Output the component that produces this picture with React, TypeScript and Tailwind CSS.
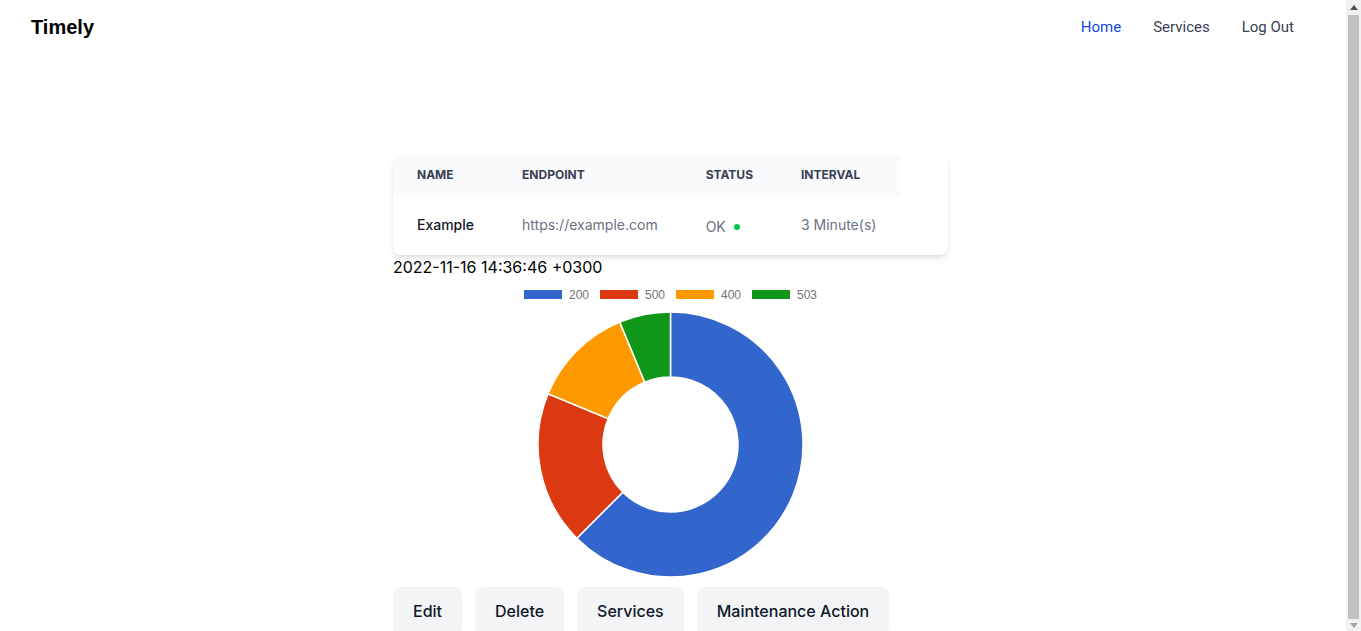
import React from "react";

const slices = [
  { label: "200", value: 10, color: "#3366cc" },
  { label: "500", value: 3, color: "#dc3912" },
  { label: "400", value: 2, color: "#ff9900" },
  { label: "503", value: 1, color: "#109618" },
];

function arcPath(cx: number, cy: number, r1: number, r2: number, a0: number, a1: number) {
  const p = (r: number, a: number) => {
    const rad = ((a - 90) * Math.PI) / 180;
    return [cx + r * Math.cos(rad), cy + r * Math.sin(rad)];
  };
  const large = a1 - a0 > 180 ? 1 : 0;
  const [x0, y0] = p(r2, a0);
  const [x1, y1] = p(r2, a1);
  const [x2, y2] = p(r1, a1);
  const [x3, y3] = p(r1, a0);
  return `M${x0} ${y0} A${r2} ${r2} 0 ${large} 1 ${x1} ${y1} L${x2} ${y2} A${r1} ${r1} 0 ${large} 0 ${x3} ${y3} Z`;
}

function Donut() {
  const total = slices.reduce((s, x) => s + x.value, 0);
  let a = 0;
  const cx = 277.5;
  const cy = 165.5;
  return (
    <svg width="555" height="308" viewBox="0 0 555 308" className="block">
      {slices.map((s, i) => (
        <g key={s.label}>
          <rect x={131 + i * 76} y={11} width={38} height={9} fill={s.color} />
          <text
            x={176 + i * 76}
            y={19.5}
            fontSize="12"
            fill="#757575"
            fontFamily="'Liberation Sans', Arial, sans-serif"
          >
            {s.label}
          </text>
        </g>
      ))}
      {slices.map((s) => {
        const a0 = a;
        const a1 = a + (s.value / total) * 360;
        a = a1;
        return (
          <path
            key={s.label}
            d={arcPath(cx, cy, 67.5, 132.5, a0, a1)}
            fill={s.color}
            stroke="#ffffff"
            strokeWidth="1.5"
          />
        );
      })}
    </svg>
  );
}

function FakeScrollbar() {
  return (
    <div className="flex h-[631px] w-[15px] shrink-0 flex-col bg-[#f1f1f1]">
      <div className="flex h-[15px] items-center justify-center">
        <svg width="8" height="5" viewBox="0 0 8 5">
          <polygon points="4,0 8,5 0,5" fill="#505050" />
        </svg>
      </div>
      <div className="mx-[2px] flex-1 bg-[#c1c1c1]" />
      <div className="flex h-[12px] items-center justify-center">
        <svg width="8" height="5" viewBox="0 0 8 5">
          <polygon points="0,0 8,0 4,5" fill="#a3a3a3" />
        </svg>
      </div>
    </div>
  );
}

export default function App() {
  return (
    <div className="flex h-[631px] overflow-hidden bg-white font-['Inter',sans-serif]">
      <div className="min-w-0 flex-1">
        <header className="flex h-[54px] items-center justify-between pl-[31px] pr-[52px]">
          <span className="font-['Liberation_Sans',Arial,sans-serif] text-[20px] font-bold text-black">Timely</span>
          <nav className="flex items-center gap-8 pt-[1px] font-['Roboto',sans-serif] text-[15px]">
            <a className="text-blue-700">Home</a>
            <a className="text-gray-700">Services</a>
            <a className="text-gray-700">Log Out</a>
          </nav>
        </header>
        <main className="mx-auto mt-[101px] w-[560px]">
          <div className="w-[555px] overflow-hidden rounded-lg bg-white shadow-md">
            <table className="text-left text-sm text-gray-500">
              <thead className="bg-gray-50 text-xs uppercase text-gray-700">
                <tr>
                  <th className="px-6 py-3 font-bold">Name</th>
                  <th className="px-6 py-3 font-bold">Endpoint</th>
                  <th className="px-6 py-3 font-bold">Status</th>
                  <th className="px-6 py-3 font-bold">Interval</th>
                </tr>
              </thead>
              <tbody>
                <tr className="h-[60px]">
                  <td className="whitespace-nowrap px-6 font-medium text-gray-900">Example</td>
                  <td className="px-6">https://example.com</td>
                  <td className="px-6">
                    <span className="inline-flex items-center gap-2 pt-[3px]">
                      OK <span className="h-[6px] w-[6px] rounded-full bg-green-500" />
                    </span>
                  </td>
                  <td className="whitespace-nowrap px-6">3 Minute(s)</td>
                </tr>
              </tbody>
            </table>
          </div>
          <div className="text-base leading-6 text-black">2022-11-16 14:36:46 +0300</div>
          <Donut />
          <div className="flex gap-[13px]">
            {["Edit", "Delete", "Services", "Maintenance Action"].map((b) => (
              <button key={b} className="rounded-lg bg-gray-100 px-5 py-3 text-base font-medium text-gray-900">
                {b}
              </button>
            ))}
          </div>
        </main>
      </div>
      <FakeScrollbar />
    </div>
  );
}
